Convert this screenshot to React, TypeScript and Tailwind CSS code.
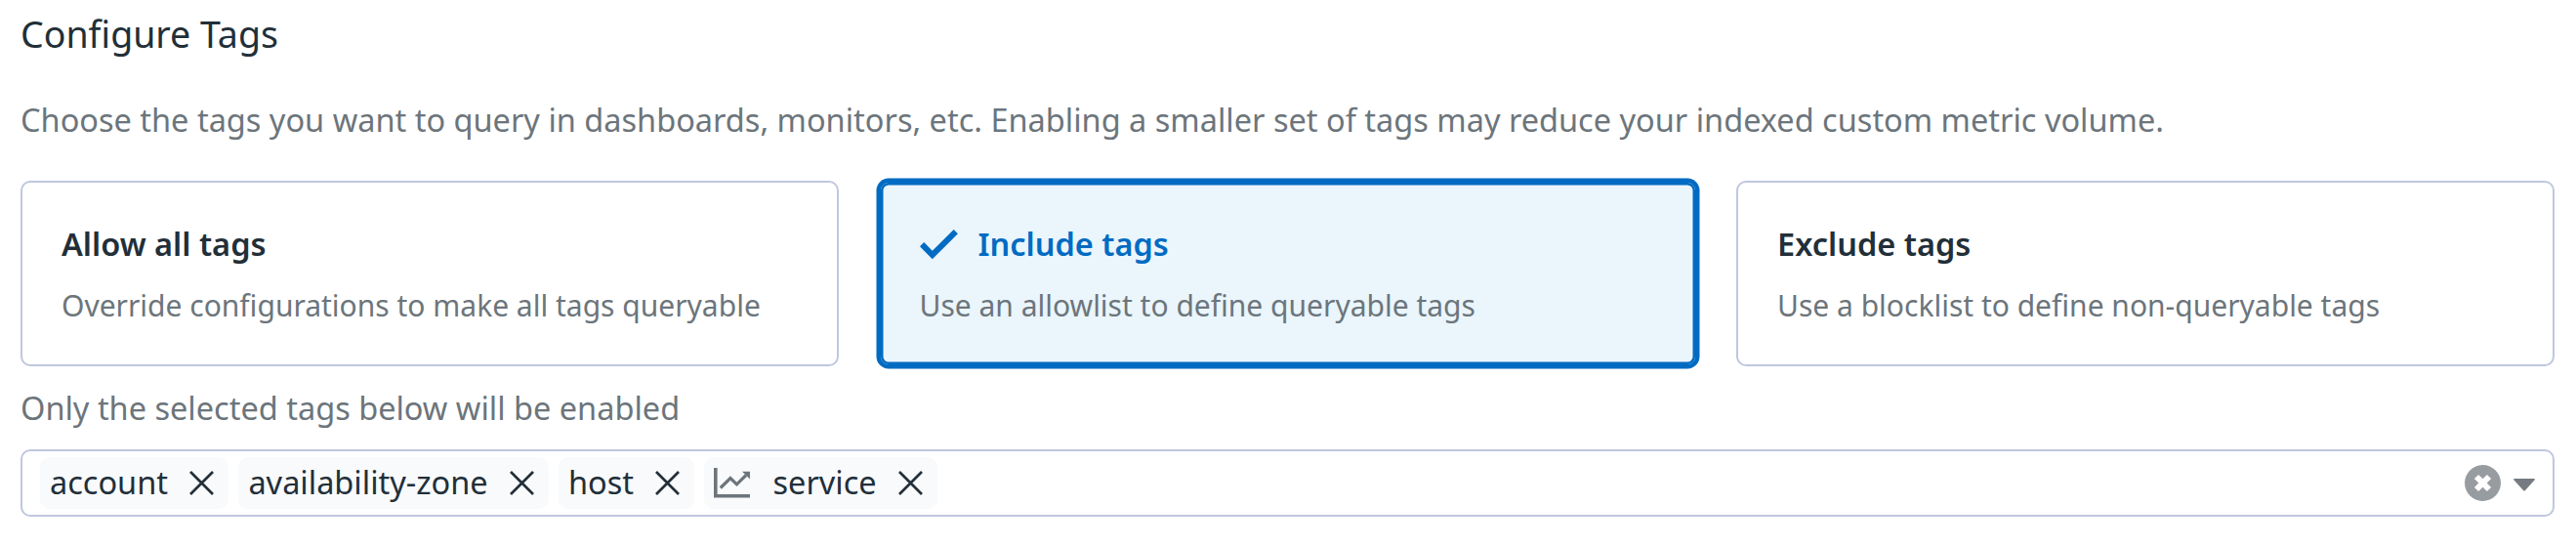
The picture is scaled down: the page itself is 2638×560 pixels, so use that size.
import React from "react";

const XIcon = () => (
  <svg className="h-[25px] w-[25px] shrink-0" viewBox="0 0 25 25" fill="none" stroke="#222f39" strokeWidth="2.7">
    <path d="M1 1 24 24M24 1 1 24" />
  </svg>
);

const ChartIcon = () => (
  <svg className="mr-[23px] h-[31px] w-[37px] shrink-0" viewBox="0 0 37 31" fill="none" stroke="#6c757b">
    <path d="M1.8 0V28.8H37" strokeWidth="3.6" />
    <path d="M6.800 20.500 17 10.500 23.500 16.800 33 7.500" strokeWidth="3.2" />
    <path d="M29 3.700H37V11.500Z" fill="#6c757b" stroke="none" />
  </svg>
);

function Chip({ label, chart }: { label: string; chart?: boolean }) {
  return (
    <div className="flex h-[53px] items-center rounded-[10px] bg-[#f9fafc] pl-[10px] pr-[15px] text-[32.5px] leading-none text-[#222f39]">
      {chart && <ChartIcon />}
      <span className="mr-[22.4px] whitespace-nowrap">{label}</span>
      <XIcon />
    </div>
  );
}

function Card({ title, text, selected }: { title: string; text: string; selected?: boolean }) {
  return (
    <div
      className={
        selected
          ? "flex flex-col rounded-[10px] border-2 border-[#006bc2] bg-[#eaf5fc] px-10 pt-[39px] shadow-[0_0_0_2.5px_#006bc2,inset_0_0_0_2.5px_#006bc2]"
          : "flex flex-col rounded-[10px] border-2 border-[#c0c7de] px-10 pt-[39px]"
      }
    >
      <div className={selected ? "flex h-[48px] items-center text-[#006bc2]" : "flex h-[48px] items-center text-[#222f39]"}>
        {selected && (
          <svg className="mr-[21px] h-[31px] w-[39px]" viewBox="0 0 39 31" fill="none" stroke="currentColor" strokeWidth="6">
            <path d="M2.1 15.200 12.800 26 36.800 2.200" />
          </svg>
        )}
        <span className="text-[32.5px] font-semibold leading-[48px]">{title}</span>
      </div>
      <p className="mt-[16px] text-[30px] leading-[45px] text-[#6c757b]">{text}</p>
    </div>
  );
}

export default function App() {
  return (
    <main className="flex h-[560px] w-[2638px] flex-col bg-white pl-[21px] pr-[22px] font-['Noto_Sans',sans-serif]">
      <h1 className="mt-[7px] text-[37.5px] leading-[56px] text-[#222f39]">Configure Tags</h1>
      <p className="mt-[36px] text-[32.5px] leading-[48px] text-[#6c757b]">
        Choose the tags you want to query in dashboards, monitors, etc. Enabling a smaller set of tags may reduce your indexed custom metric volume.
      </p>
      <section className="mt-[38px] grid h-[190px] shrink-0 grid-cols-3 gap-x-[40.5px]">
        <Card title="Allow all tags" text="Override configurations to make all tags queryable" />
        <Card title="Include tags" text="Use an allowlist to define queryable tags" selected />
        <Card title="Exclude tags" text="Use a blocklist to define non-queryable tags" />
      </section>
      <p className="mt-[19px] text-[32.5px] leading-[48px] text-[#6c757b]">Only the selected tags below will be enabled</p>
      <div className="mt-[18px] flex h-[69px] shrink-0 items-center gap-[10px] rounded-[10px] border-2 border-[#c0c7de] pl-[18px] pr-[18px]">
        <Chip label="account" />
        <Chip label="availability-zone" />
        <Chip label="host" />
        <Chip label="service" chart />
        <svg className="ml-auto mr-[3px] h-[37px] w-[37px]" viewBox="0 0 37 37">
          <circle cx="18.5" cy="18.5" r="18.5" fill="#979ca0" />
          <path d="M12 12 25 25M25 12 12 25" stroke="#fff" strokeWidth="6" />
        </svg>
        <svg className="mt-[3px] h-[13px] w-[22px]" viewBox="0 0 22 13">
          <path d="M1 0H21Q22.500 0 21.500 1.500L12 12Q11 13 10 12L.5 1.500Q-.5 0 1 0Z" fill="#757b80" />
        </svg>
      </div>
    </main>
  );
}
